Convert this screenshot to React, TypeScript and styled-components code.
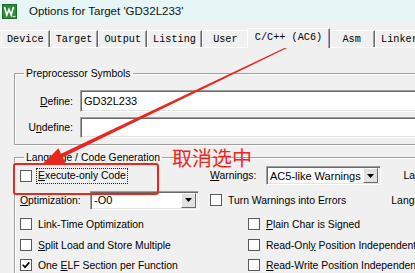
import React from "react";
import styled, { createGlobalStyle } from "styled-components";

const GlobalStyle = createGlobalStyle`
  html, body {
    margin: 0;
    padding: 0;
    background: #f0f0f0;
  }
`;

const Window = styled.div`
  position: relative;
  width: 415px;
  height: 273px;
  overflow: hidden;
  background: #f0f0f0;
  font-family: "Liberation Sans", Arial, sans-serif;
  font-size: 10.4px;
  color: #000;
`;

const TitleBar = styled.div`
  height: 22px;
  display: flex;
  align-items: center;
  gap: 12px;
  padding-left: 2px;
  background: #e6f6f7;
  font-size: 11.5px;
  color: #111;
`;

const TabStrip = styled.div`
  margin-top: 6px;
  height: 19px;
  display: flex;
  align-items: flex-end;
  padding-left: 1px;
  border-bottom: 1px solid #fff;
  width: 600px;
`;

const Tab = styled.div<{ $active?: boolean }>`
  box-sizing: border-box;
  min-width: 47px;
  height: ${(p) => (p.$active ? "20px" : "17px")};
  margin: ${(p) => (p.$active ? "0 -2px -1px" : "0")};
  padding: ${(p) => (p.$active ? "0 7px 3px" : "1px 5px 0")};
  position: relative;
  z-index: ${(p) => (p.$active ? 1 : 0)};
  display: flex;
  align-items: center;
  justify-content: center;
  background: #f0f0f0;
  border-top: 1px solid #fff;
  border-left: 1px solid #fff;
  border-right: 1px solid #696969;
  box-shadow: inset -1px 0 0 #a0a0a0;
  font-family: "Liberation Mono", "Courier New", monospace;
  font-size: 10.2px;
  white-space: nowrap;
`;

const Panel = styled.div`
  padding: 19px 0 0 14px;
  width: 700px;
`;

const Group = styled.fieldset<{ $gap?: number }>`
  margin: ${(p) => p.$gap ?? 0}px 0 0;
  padding: 0;
  border: 1px solid #a0a0a0;
  box-shadow: inset 1px 1px 0 #fff, 1px 1px 0 #fff;
  min-width: 0;
`;

const Legend = styled.legend`
  margin-left: 9px;
  padding: 0 2px;
  line-height: 13px;
  font-size: 10.4px;
`;

const SymbolGrid = styled.div`
  display: grid;
  grid-template-columns: 58px 560px;
  grid-template-rows: 22px 21px;
  column-gap: 7px;
  row-gap: 5px;
  padding: 10px 0 6px;
  align-items: center;
`;

const FieldLabel = styled.label`
  text-align: right;
  white-space: nowrap;
`;

const TextBox = styled.div<{ $h: number }>`
  box-sizing: border-box;
  height: ${(p) => p.$h}px;
  display: flex;
  align-items: center;
  padding-left: 3px;
  background: #fff;
  border: 1px solid;
  border-color: #a0a0a0 #fff #fff #a0a0a0;
  box-shadow: inset 1px 1px 0 #696969, inset -1px -1px 0 #e3e3e3;
  font-size: 11px;
`;

const CodeGrid = styled.div`
  display: grid;
  grid-template-columns: 190px 180px 73px;
  grid-template-rows: 23px 26px 22px 20px 20px;
  padding-left: 5px;
  align-items: center;
`;

const Row = styled.div<{ $indent?: number }>`
  display: flex;
  align-items: center;
  gap: 6px;
  margin-left: ${(p) => p.$indent ?? 0}px;
  white-space: nowrap;
`;

const RightLabel = styled.div`
  text-align: right;
  white-space: nowrap;
`;

const Box = styled.span`
  box-sizing: border-box;
  flex: none;
  width: 12px;
  height: 12px;
  display: inline-flex;
  align-items: center;
  justify-content: center;
  background: #fff;
  border: 1px solid #5a5a5a;
`;

const Focus = styled.span`
  padding: 1px 1px 2px;
  margin-left: -2px;
  border: 1px dotted #222;
`;

const Label = styled.span<{ $w?: number }>`
  width: ${(p) => (p.$w ? `${p.$w}px` : "auto")};
  flex: none;
`;

const Combo = styled.div<{ $w: number }>`
  box-sizing: border-box;
  width: ${(p) => p.$w}px;
  height: 19px;
  display: flex;
  align-items: center;
  justify-content: space-between;
  padding: 0 2px 0 3px;
  background: #fff;
  border: 1px solid;
  border-color: #a0a0a0 #fff #fff #a0a0a0;
  box-shadow: inset 1px 1px 0 #696969, inset -1px -1px 0 #e3e3e3;
  font-size: 11px;
`;

const DropButton = styled.span`
  box-sizing: border-box;
  width: 15px;
  height: 15px;
  display: flex;
  align-items: center;
  justify-content: center;
  background: #e1e1e1;
  border: 1px solid;
  border-color: #fff #696969 #696969 #fff;
`;

const Overlay = styled.svg`
  position: absolute;
  left: 0;
  top: 0;
  pointer-events: none;
`;

const Note = styled.div`
  position: absolute;
  left: 172px;
  top: 147px;
  font-family: "Noto Sans CJK SC", "Noto Sans", sans-serif;
  font-size: 20px;
  line-height: 22px;
  color: #e8281e;
`;

const AppIcon = () => (
  <svg width="15" height="15" viewBox="0 0 15 15">
    <rect x="0" y="0" width="15" height="15" fill="#2f8a3c" />
    <rect x="0.5" y="0.5" width="14" height="14" fill="none" stroke="#1d6a28" />
    <path d="M2.5 3 L4.8 11 L7 5.5 L9.2 11 L11.5 3" fill="none" stroke="#fff" strokeWidth="1.6" />
    <path d="M10.5 12.5 h3" stroke="#cfe8cf" strokeWidth="1.2" />
  </svg>
);

const Arrow = () => (
  <svg width="9" height="6" viewBox="0 0 9 6">
    <path d="M1 1 H8 L4.5 5 Z" fill="#000" />
  </svg>
);

const Check = () => (
  <svg width="10" height="10" viewBox="0 0 10 10">
    <polyline points="1.8,4.8 4,7.2 8.3,2.4" fill="none" stroke="#000" strokeWidth="1.7" />
  </svg>
);

type CheckProps = {
  children: React.ReactNode;
  checked?: boolean;
  indent?: number;
  focused?: boolean;
};

const CheckItem = ({ children, checked, indent, focused }: CheckProps) => (
  <Row $indent={indent}>
    <Box>{checked && <Check />}</Box>
    {focused ? <Focus>{children}</Focus> : <span>{children}</span>}
  </Row>
);

const tabs = ["Device", "Target", "Output", "Listing", "User", "C/C++ (AC6)", "Asm", "Linker", "Debug"];

export default function App() {
  return (
    <Window>
      <GlobalStyle />
      <TitleBar>
        <AppIcon />
        <span>Options for Target 'GD32L233'</span>
      </TitleBar>

      <TabStrip>
        {tabs.map((t) => (
          <Tab key={t} $active={t === "C/C++ (AC6)"}>
            {t}
          </Tab>
        ))}
      </TabStrip>

      <Panel>
        <Group>
          <Legend>Preprocessor Symbols</Legend>
          <SymbolGrid>
            <FieldLabel>
              <u>D</u>efine:
            </FieldLabel>
            <TextBox $h={22}>GD32L233</TextBox>
            <FieldLabel>
              U<u>n</u>define:
            </FieldLabel>
            <TextBox $h={21} />
          </SymbolGrid>
        </Group>

        <Group $gap={6}>
          <Legend>Language / Code Generation</Legend>
          <CodeGrid>
            <CheckItem focused>
              <u>E</u>xecute-only Code
            </CheckItem>
            <Row>
              <Label $w={50}>
                <u>W</u>arnings:
              </Label>
              <Combo $w={115}>
                AC5-like Warnings
                <DropButton>
                  <Arrow />
                </DropButton>
              </Combo>
            </Row>
            <RightLabel>Language C:</RightLabel>

            <Row>
              <Label $w={64}>
                <u>O</u>ptimization:
              </Label>
              <Combo $w={109}>
                -O0
                <DropButton>
                  <Arrow />
                </DropButton>
              </Combo>
            </Row>
            <CheckItem>Turn Warnings into Errors</CheckItem>
            <RightLabel>Language C++:</RightLabel>

            <CheckItem>Link-Time Optimization</CheckItem>
            <CheckItem indent={38}>
              <u>P</u>lain Char is Signed
            </CheckItem>
            <span />

            <CheckItem>
              <u>S</u>plit Load and Store Multiple
            </CheckItem>
            <CheckItem indent={38}>
              Read-Onl<u>y</u> Position Independent
            </CheckItem>
            <span />

            <CheckItem checked>
              One <u>E</u>LF Section per Function
            </CheckItem>
            <CheckItem indent={38}>
              <u>R</u>ead-Write Position Independent
            </CheckItem>
            <span />
          </CodeGrid>
        </Group>
      </Panel>

      <Overlay width="415" height="273" viewBox="0 0 415 273">
        <rect x="14" y="164" width="144" height="30" rx="2" fill="none" stroke="#e8281e" strokeWidth="2" />
        <polygon
          points="292.2,45.4 62.8,157.3 65.3,162.7 42,165 58.4,148.3 61,153.7 291.8,44.6"
          fill="#e8281e"
        />
      </Overlay>
      <Note>取消选中</Note>
    </Window>
  );
}
